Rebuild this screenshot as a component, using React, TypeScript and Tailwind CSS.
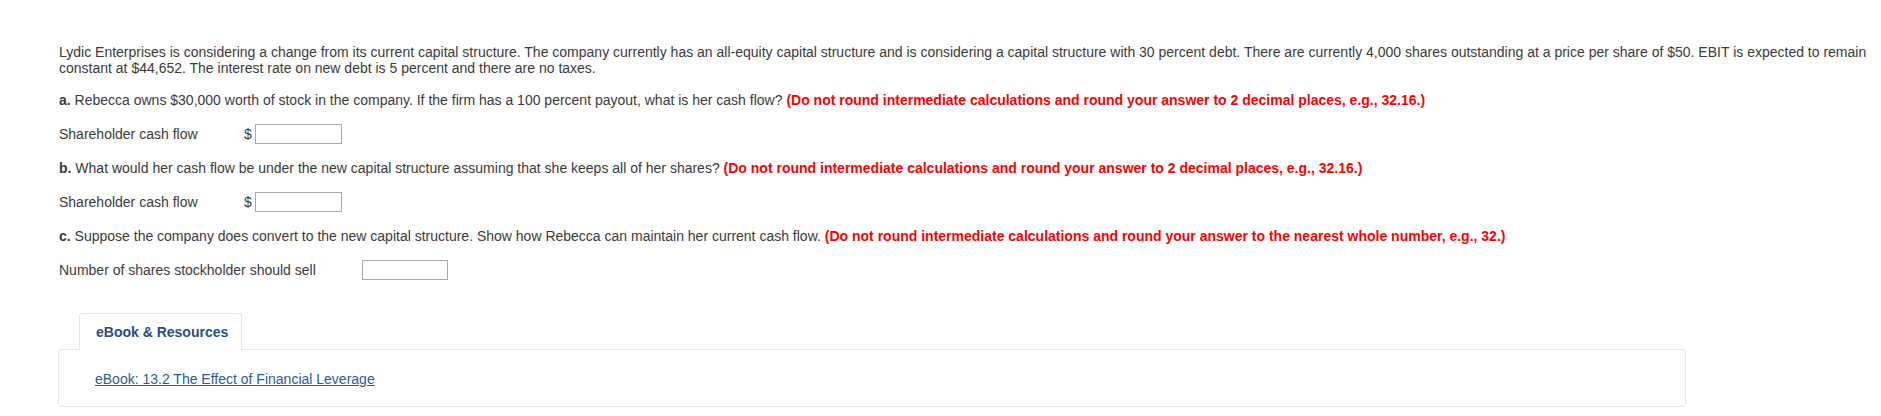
const red = "font-bold text-[#ff0000]";

function CashRow({ label }: { label: string }) {
  return (
    <div className="flex h-[20px] items-center">
      <span className="w-[185px]">{label}</span>
      <span>$</span>
      <input type="text" className="ml-[3px] h-[20px] w-[87px] border border-[#a9a9a9] bg-white outline-none" />
    </div>
  );
}

export default function App() {
  return (
    <div
      className="min-h-[416px] bg-white pl-[59px] pr-[10px] pt-[44px] text-[14px] leading-[16px] text-[#3a3a3a]"
      style={{ fontFamily: '"Liberation Sans", Arial, sans-serif' }}
    >
      <div className="flex flex-col gap-4">
        <p>
          Lydic Enterprises is considering a change from its current capital structure. The company currently has an
          all-equity capital structure and is considering a capital structure with 30 percent debt. There are currently
          4,000 shares outstanding at a price per share of $50. EBIT is expected to remain constant at $44,652. The
          interest rate on new debt is 5 percent and there are no taxes.
        </p>
        <p>
          <b>a.</b> Rebecca owns $30,000 worth of stock in the company. If the firm has a 100 percent payout, what is
          her cash flow?{" "}
          <span className={red}>
            (Do not round intermediate calculations and round your answer to 2 decimal places, e.g., 32.16.)
          </span>
        </p>
        <CashRow label="Shareholder cash flow" />
        <p>
          <b>b.</b> What would her cash flow be under the new capital structure assuming that she keeps all of her
          shares?{" "}
          <span className={red}>
            (Do not round intermediate calculations and round your answer to 2 decimal places, e.g., 32.16.)
          </span>
        </p>
        <CashRow label="Shareholder cash flow" />
        <p>
          <b>c.</b> Suppose the company does convert to the new capital structure. Show how Rebecca can maintain her
          current cash flow.{" "}
          <span className={red}>
            (Do not round intermediate calculations and round your answer to the nearest whole number, e.g., 32.)
          </span>
        </p>
        <div className="flex h-[20px] items-center">
          <span className="w-[303px]">Number of shares stockholder should sell</span>
          <input type="text" className="h-[20px] w-[86px] border border-[#a9a9a9] bg-white outline-none" />
        </div>
      </div>

      {/* resources tabs */}
      <div className="ml-[-1px] mt-[33px] w-[1628px]">
        <div className="relative z-10 ml-[21px] flex h-[37px] w-[163px] items-center rounded-t-[3px] border border-b-0 border-[#e6e6e6] bg-white pl-[16px] font-bold text-[#2b4d80]">
          eBook &amp; Resources
        </div>
        <div className="mt-[-1px] h-[58px] rounded-[3px] border border-[#e6e6e6] bg-white pl-[36px] pt-[21px]">
          <a href="#" className="text-[#2b5a96] underline">
            eBook: 13.2 The Effect of Financial Leverage
          </a>
        </div>
      </div>
    </div>
  );
}
